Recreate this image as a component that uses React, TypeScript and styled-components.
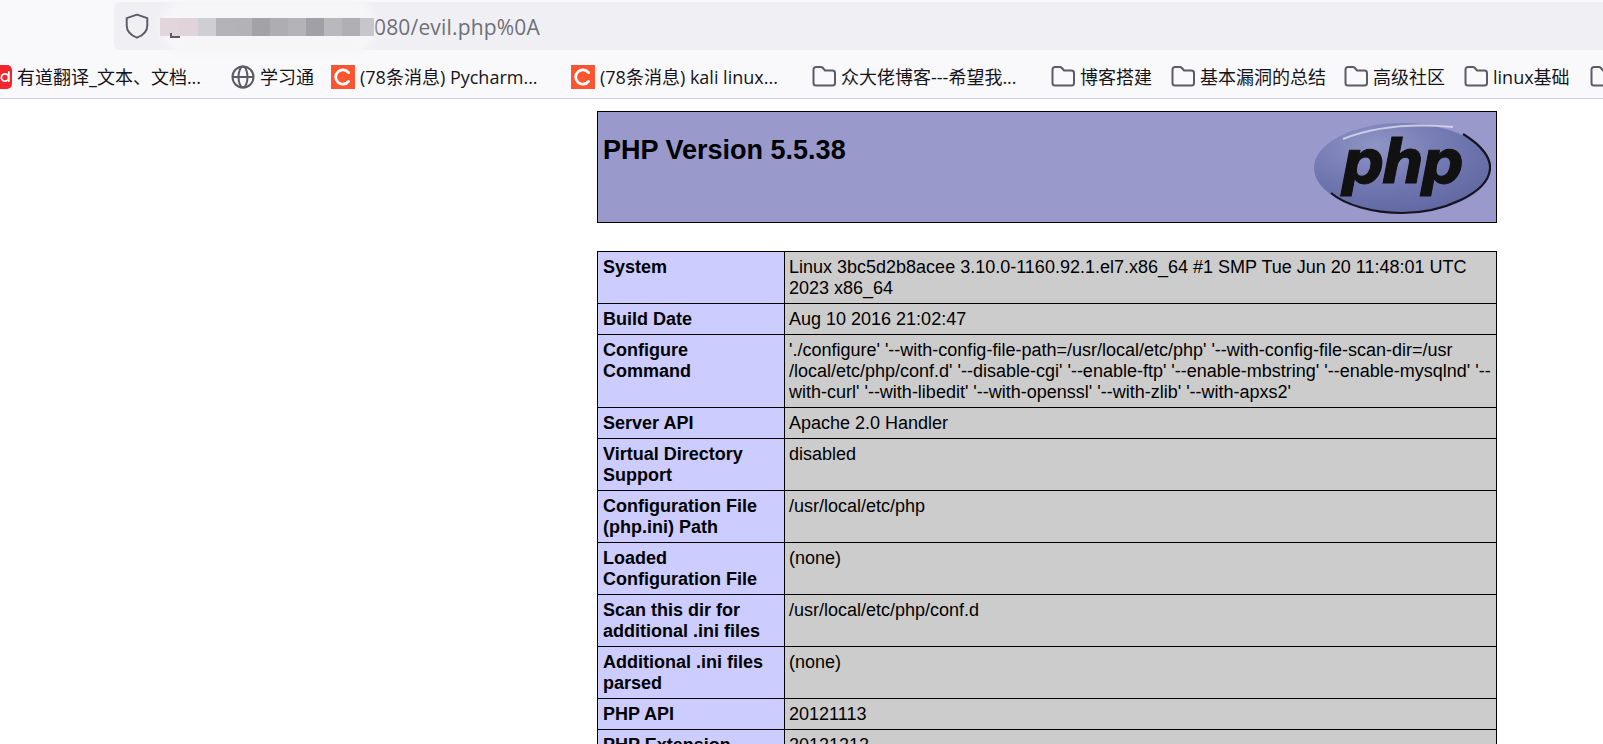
import React from "react";
import styled, { createGlobalStyle } from "styled-components";

const Global = createGlobalStyle`
  html, body { margin: 0; padding: 0; background: #fff; }
  body { overflow: hidden; height: 744px; font-family: "Liberation Sans", Arial, sans-serif; }
`;

const Page = styled.div`
  width: 1603px;
  height: 744px;
  overflow: hidden;
  display: flex;
  flex-direction: column;
`;

const Chrome = styled.header`
  flex: 0 0 99px;
  box-sizing: border-box;
  height: 99px;
  background: #f9f9fb;
  border-bottom: 1px solid #cfcfd8;
  overflow: hidden;
  position: relative;
`;

const Toolbar = styled.div`
  height: 52px;
  padding: 2px 0 0 114px;
  box-sizing: border-box;
`;

const UrlBar = styled.div`
  height: 48px;
  border-radius: 6px 0 0 6px;
  background: #f0f0f4;
  display: flex;
  align-items: center;
  padding-left: 10px;
  position: relative;
  font-family: "Open Sans", "Liberation Sans", sans-serif;
`;

const UrlText = styled.span`
  margin-left: 224px;
  font-size: 21px;
  letter-spacing: 0.17px;
  color: #6f6f78;
  position: relative;
  top: 1px;
`;

const Smudge = styled.div`
  position: absolute;
  left: 48px;
  top: -2px;
  width: 212px;
  height: 54px;
  background: #f6f6f9;
  filter: blur(3px);
  border-radius: 22px;
`;

const Pixels = styled.div`
  position: absolute;
  left: 46px;
  top: 16px;
  display: flex;
  filter: blur(0.6px);
`;

const Pixel = styled.i<{ $c: string; $w?: number }>`
  display: block;
  width: ${(p) => p.$w ?? 18}px;
  height: 18px;
  background: ${(p) => p.$c};
`;

const LockEdge = styled.span`
  position: absolute;
  left: 56px;
  top: 31px;
  width: 8px;
  height: 3px;
  border-left: 2px solid #5b5b66;
  border-bottom: 2px solid #5b5b66;
`;

const Bookmarks = styled.nav`
  display: flex;
  align-items: center;
  height: 50px;
  margin-left: -12px;
  color: #15141a;
  font-size: 18px;
  font-weight: 400;
  white-space: nowrap;
`;

const Bookmark = styled.div<{ $w: number }>`
  flex: 0 0 ${(p) => p.$w}px;
  width: ${(p) => p.$w}px;
  display: flex;
  align-items: center;
  gap: 5px;
  overflow: hidden;
`;

const Label = styled.span`
  font-family: "Open Sans", "Noto Sans CJK SC", sans-serif;
  position: relative;
  top: -1px;
`;

const Main = styled.main`
  margin-left: 597px;
  width: 900px;
  padding-top: 12px;
  color: #000;
  font-size: 18px;
  line-height: 21px;
`;

const Banner = styled.div`
  box-sizing: border-box;
  height: 112px;
  border: 1px solid #000;
  background: #9999cc;
  display: flex;
  justify-content: space-between;
  padding: 4px 5px 0 5px;
  margin-bottom: 28px;
`;

const Title = styled.h1`
  margin: 19px 0 0;
  font-size: 27px;
  line-height: 30px;
  font-weight: 700;
`;

const Logo = styled.svg`
  width: 178px;
  height: 94px;
  margin-top: 5px;
  flex: none;
`;

const Info = styled.table`
  width: 900px;
  table-layout: fixed;
  border-collapse: collapse;
`;

const Key = styled.td`
  width: 187px;
  box-sizing: border-box;
  border: 1px solid #000;
  background: #ccccff;
  padding: 5px 5px 4px;
  vertical-align: top;
  font-weight: 700;
`;

const Val = styled.td`
  box-sizing: border-box;
  border: 1px solid #000;
  background: #cccccc;
  padding: 5px 4px 4px;
  vertical-align: top;
`;

const pixels: [string, number][] = [
  ["#e2d5db", 19],
  ["#e0d4da", 19],
  ["#cfcfd3", 18],
  ["#b4b3b8", 18],
  ["#b3b2b7", 18],
  ["#a3a2a7", 18],
  ["#aeadb2", 18],
  ["#b4b3b8", 18],
  ["#a1a0a6", 18],
  ["#b9b8bd", 18],
  ["#b0afb4", 18],
  ["#c7c7cb", 14],
];

const iconStyle = { flex: "none" } as const;

const Folder = () => (
  <svg width="24" height="24" viewBox="0 0 24 24" fill="none" stroke="#5b5b66" strokeWidth="2" style={iconStyle}>
    <path d="M1.5 4.5A2.5 2.5 0 0 1 4 2h5c.7 0 1.2.3 1.7.8L13 5.5h7.5A2.5 2.5 0 0 1 23 8v10a2.5 2.5 0 0 1-2.5 2.5H4A2.5 2.5 0 0 1 1.5 18z" />
  </svg>
);

const CsdnIcon = () => (
  <svg width="24" height="24" viewBox="0 0 24 24" style={iconStyle}>
    <rect width="24" height="24" fill="#fc5531" />
    <path d="M17.6 7.6A7.2 7.2 0 1 0 17.6 16.4" fill="none" stroke="#fff" strokeWidth="2.8" strokeLinecap="round" />
  </svg>
);

const YoudaoIcon = () => (
  <svg width="24" height="24" viewBox="0 0 24 24" style={iconStyle}>
    <rect width="24" height="24" rx="5" fill="#f5242f" />
    <circle cx="17" cy="12.5" r="3.6" fill="none" stroke="#fff" strokeWidth="1.8" />
    <path d="M20.8 7v9" stroke="#fff" strokeWidth="1.8" strokeLinecap="round" />
  </svg>
);

const rows: [string, React.ReactNode][] = [
  ["System", "Linux 3bc5d2b8acee 3.10.0-1160.92.1.el7.x86_64 #1 SMP Tue Jun 20 11:48:01 UTC 2023 x86_64"],
  ["Build Date", "Aug 10 2016 21:02:47"],
  ["Configure Command", <>'./configure' '--with-config-file-path=/usr/local/etc/php' '--with&#8209;config&#8209;file&#8209;scan&#8209;dir=/usr<wbr />/local/etc/php/conf.d' '--disable-cgi' '--enable-ftp' '--enable-mbstring' '--enable-mysqlnd' '--with-curl' '--with-libedit' '--with-openssl' '--with-zlib' '--with-apxs2'</>],
  ["Server API", "Apache 2.0 Handler"],
  ["Virtual Directory Support", "disabled"],
  ["Configuration File (php.ini) Path", "/usr/local/etc/php"],
  ["Loaded Configuration File", "(none)"],
  ["Scan this dir for additional .ini files", "/usr/local/etc/php/conf.d"],
  ["Additional .ini files parsed", "(none)"],
  ["PHP API", "20121113"],
  ["PHP Extension", "20121212"],
];

export default function App() {
  return (
    <Page>
      <Global />
      <Chrome>
        <Toolbar>
          <UrlBar>
            <svg width="26" height="26" viewBox="0 0 24 24" fill="none" stroke="#5b5b66" strokeWidth="1.8">
              <path d="M12 1.5 L21.5 4.8 V11.5 C21.5 17 17 20.8 12 22.8 C7 20.8 2.5 17 2.5 11.5 V4.8 Z" strokeLinejoin="round" />
            </svg>
            <UrlText>080/evil.php%0A</UrlText>
            <Smudge />
            <Pixels>
              {pixels.map(([c, w], i) => <Pixel key={i} $c={c} $w={w} />)}
            </Pixels>
            <LockEdge />
          </UrlBar>
        </Toolbar>
        <Bookmarks>
          <Bookmark $w={243}>
            <YoudaoIcon />
            <Label>有道翻译_文本、文档...</Label>
          </Bookmark>
          <Bookmark $w={100}>
            <svg width="24" height="24" viewBox="0 0 24 24" fill="none" stroke="#5b5b66" strokeWidth="2" style={iconStyle}>
              <circle cx="12" cy="12" r="10.5" />
              <ellipse cx="12" cy="12" rx="4.5" ry="10.5" />
              <path d="M1.5 12h21" />
            </svg>
            <Label>学习通</Label>
          </Bookmark>
          <Bookmark $w={240}>
            <CsdnIcon />
            <Label>(78条消息) Pycharm...</Label>
          </Bookmark>
          <Bookmark $w={241}>
            <CsdnIcon />
            <Label>(78条消息) kali linux...</Label>
          </Bookmark>
          <Bookmark $w={239}><Folder /><Label>众大佬博客---希望我...</Label></Bookmark>
          <Bookmark $w={120}><Folder /><Label>博客搭建</Label></Bookmark>
          <Bookmark $w={173}><Folder /><Label>基本漏洞的总结</Label></Bookmark>
          <Bookmark $w={120}><Folder /><Label>高级社区</Label></Bookmark>
          <Bookmark $w={126}><Folder /><Label>linux基础</Label></Bookmark>
          <Bookmark $w={24}><Folder /></Bookmark>
        </Bookmarks>
      </Chrome>
      <Main>
        <Banner>
          <Title>PHP Version 5.5.38</Title>
          <Logo viewBox="0 0 178 94" aria-label="PHP logo">
            <defs>
              <radialGradient id="g" cx="35%" cy="25%" r="85%">
                <stop offset="0" stopColor="#8f94c6" />
                <stop offset="0.55" stopColor="#7076af" />
                <stop offset="1" stopColor="#5f659f" />
              </radialGradient>
            </defs>
            <ellipse cx="89" cy="47" rx="88" ry="45" fill="url(#g)" />
            <path d="M30 18 Q75 0 140 6" stroke="#dcdcef" strokeWidth="2" fill="none" opacity="0.8" />
            <path d="M150 13 C170 25 178 38 177 48 C175 72 130 92 89 92 C60 92 32 84 18 72" stroke="#15151f" strokeWidth="2.2" fill="none" />
            <text x="88" y="62" textAnchor="middle" fontFamily="DejaVu Sans, sans-serif" fontStyle="italic" fontWeight="700" fontSize="60" fill="#111" stroke="#111" strokeWidth="1" letterSpacing="-3">php</text>
          </Logo>
        </Banner>
        <Info>
          <tbody>
            {rows.map(([k, v]) => (
              <tr key={k}>
                <Key>{k}</Key>
                <Val>{v}</Val>
              </tr>
            ))}
          </tbody>
        </Info>
      </Main>
    </Page>
  );
}
